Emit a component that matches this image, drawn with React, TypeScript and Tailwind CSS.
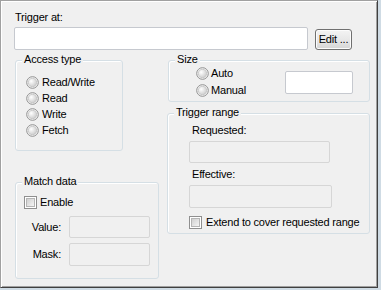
import React from "react";

const font = { fontFamily: '"Liberation Sans", Arial, sans-serif' };

function Radio() {
  return (
    <svg width="13" height="13" viewBox="0 0 13 13" className="shrink-0">
      <defs>
        <radialGradient id="rg" cx="0.35" cy="0.35" r="0.75">
          <stop offset="0" stopColor="#ffffff" />
          <stop offset="1" stopColor="#c8c8c8" />
        </radialGradient>
      </defs>
      <circle cx="6.5" cy="6.5" r="5.8" fill="#f4f4f4" stroke="#8f8f8f" strokeWidth="1" />
      <circle cx="6.5" cy="6.5" r="4.2" fill="url(#rg)" stroke="#b8b8b8" strokeWidth="0.6" />
    </svg>
  );
}

function Check() {
  return (
    <div className="w-[13px] h-[13px] shrink-0 border border-[#8f8f8f] bg-white p-[1px]">
      <div className="w-full h-full border border-[#b5b5b5] bg-gradient-to-br from-[#d0d0d0] to-[#f4f4f4]" />
    </div>
  );
}

function Group({
  label,
  className,
  children,
}: {
  label: string;
  className: string;
  children?: React.ReactNode;
}) {
  return (
    <div
      className={
        "relative border border-[#d5dfe5] rounded-[3px] shadow-[inset_1px_1px_0_#ffffff] " +
        className
      }
    >
      <span className="absolute -top-[8px] left-[6px] px-[2px] bg-[#f0f0f0] leading-[13px]">
        {label}
      </span>
      {children}
    </div>
  );
}

export default function App() {
  return (
    <div className="w-[381px] h-[290px] bg-[#cfdbe4] text-[11px] tracking-[-0.2px] text-black" style={font}>
      <div className="w-[378px] h-[288px] border-l border-t border-[#a0a0a0] border-r border-b border-r-[#404040] border-b-[#404040] bg-[#f0f0f0] pl-[13px] pt-[10px] shadow-[inset_1px_1px_0_#ffffff,inset_-1px_-1px_0_#a0a0a0]">
        <div className="ml-[1px] leading-[13px]">Trigger at:</div>
        <div className="flex items-end mt-[3px]">
          <div className="w-[294px] h-[23px] bg-white border border-[#c6c9cf] rounded-[2px]" />
          <div className="ml-[7px] w-[37px] h-[21px] border border-[#707070] rounded-[3px] bg-gradient-to-b from-[#f4f4f4] via-[#e8e8e8] to-[#d5d5d5] shadow-[inset_0_0_0_1px_#fcfcfc] flex items-center justify-center leading-[13px]">
            Edit ...
          </div>
        </div>
        <div className="flex mt-[10px] ml-[1px]">
          <div className="w-[144px] flex flex-col items-start">
            <Group label="Access type" className="w-[108px] h-[91px] pt-[13px] pl-[10px]">
              {["Read/Write", "Read", "Write", "Fetch"].map((t) => (
                <div key={t} className="h-[16px] flex items-center">
                  <Radio />
                  <span className="ml-[3px] leading-[13px]">{t}</span>
                </div>
              ))}
            </Group>
            <Group label="Match data" className="mt-[31px] w-[144px] h-[97px] pl-[8px] pt-[12px]">
              <div className="flex items-center h-[14px]">
                <Check />
                <span className="ml-[3px] leading-[13px]">Enable</span>
              </div>
              <div className="flex items-center mt-[7px] -ml-[8px]">
                <span className="w-[45px] text-right leading-[13px]">Value:</span>
                <div className="ml-[8px] w-[81px] h-[22px] border border-[#d6d6d6] rounded-[2px] bg-[#f0f0f0]" />
              </div>
              <div className="flex items-center mt-[5px] -ml-[8px]">
                <span className="w-[45px] text-right leading-[13px]">Mask:</span>
                <div className="ml-[8px] w-[81px] h-[23px] border border-[#d6d6d6] rounded-[2px] bg-[#f0f0f0]" />
              </div>
            </Group>
          </div>
          <div className="ml-[8px] flex flex-col">
            <Group label="Size" className="ml-[1px] w-[202px] h-[42px] flex items-start">
              <div className="ml-[27px] mt-[4px] flex flex-col">
                <div className="h-[17px] flex items-center">
                  <Radio />
                  <span className="ml-[2px] leading-[13px]">Auto</span>
                </div>
                <div className="h-[17px] flex items-center">
                  <Radio />
                  <span className="ml-[2px] leading-[13px]">Manual</span>
                </div>
              </div>
              <div className="ml-auto mr-[16px] mt-[10px] w-[68px] h-[23px] bg-white border border-[#c6c9cf] rounded-[2px]" />
            </Group>
            <Group label="Trigger range" className="mt-[11px] w-[203px] h-[121px] pl-[21px] pt-[10px]">
              <div className="ml-[3px] leading-[13px]">Requested:</div>
              <div className="mt-[4px] w-[141px] h-[22px] border border-[#d6d6d6] rounded-[2px] bg-[#f0f0f0]" />
              <div className="mt-[5px] ml-[3px] leading-[13px]">Effective:</div>
              <div className="mt-[4px] w-[143px] h-[23px] border border-[#d6d6d6] rounded-[2px] bg-[#f0f0f0]" />
              <div className="mt-[7px] flex items-center h-[14px]">
                <Check />
                <span className="ml-[4px] leading-[13px]">Extend to cover requested range</span>
              </div>
            </Group>
          </div>
        </div>
      </div>
    </div>
  );
}
